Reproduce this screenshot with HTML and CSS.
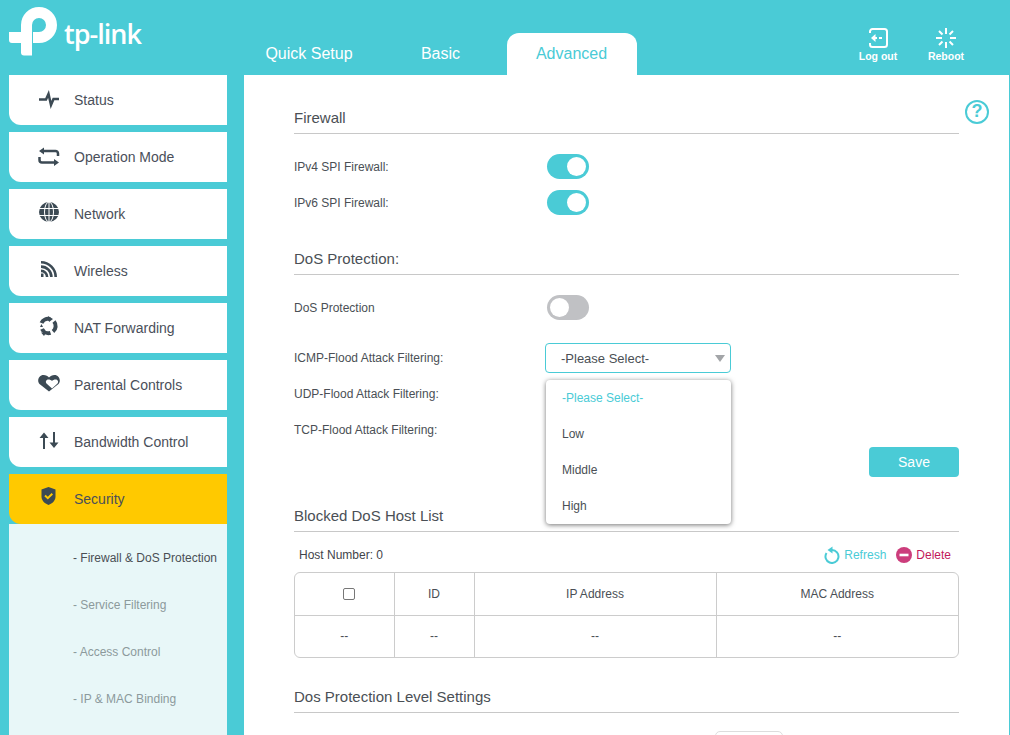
FILE: index.html
```html
<!DOCTYPE html>
<html lang="en">
<head>
    <meta charset="UTF-8">
    <meta name="viewport" content="width=device-width, initial-scale=1.0">
    <title>TP-Link Firewall</title>
    <link rel="stylesheet" href="styles.css">
</head>
<body>
    <header class="top">
        <div class="logo">
            <svg class="logo-mark" width="60" height="60" viewBox="0 0 60 60"><path fill="#fff" d="M21 32V25A18 18 0 1 1 39 43H33V32H39A7 7 0 1 0 32 25V55.5H24Q21 55.5 21 52.5V43H12Q9 43 9 40V32Z"/></svg>
            <span class="logo-text">tp-link</span>
        </div>
        <nav class="tabs">
            <a class="tab">Quick Setup</a>
            <a class="tab">Basic</a>
            <a class="tab active">Advanced</a>
        </nav>
        <div class="top-actions">
            <a class="top-action">
                <svg width="22" height="22" viewBox="0 0 22 22" fill="none" stroke="#fff" stroke-width="2"><path d="M3 6V4.500A2.500 2.500 0 0 1 5.500 2H17.500A2.500 2.500 0 0 1 20 4.500V17.500A2.500 2.500 0 0 1 17.500 20H5.500A2.500 2.500 0 0 1 3 17.500V16"/><path d="M8 11h2M12 11h3"/><path fill="#fff" stroke="none" d="M4 11l4.500-4v8z"/></svg>
                <span>Log out</span>
            </a>
            <a class="top-action">
                <svg width="22" height="22" viewBox="0 0 22 22" fill="none" stroke="#fff" stroke-width="2"><path d="M11 1v6M11 15v6M1 11h6M15 11h6M4 4l3.500 3.500M14.500 14.500L18 18M18 4l-3.500 3.500M7.500 14.500L4 18"/></svg>
                <span>Reboot</span>
            </a>
        </div>
    </header>

    <div class="layout">
        <aside class="side">
            <a class="side-item">
                <svg class="side-icon" viewBox="0 0 24 24" fill="none" stroke="#3c4a54" stroke-width="2.500"><path d="M2 11.500h7l2.500-5.500 2.500 11 2.500-6h5.500"/></svg>
                Status
            </a>
            <a class="side-item">
                <svg class="side-icon" viewBox="0 0 24 24" fill="none" stroke="#3c4a54" stroke-width="2.500"><path d="M6 6H18.500A2.500 2.500 0 0 1 21 8.500V11M18 17.500H5A2.500 2.500 0 0 1 2.500 15V12"/><path fill="#3c4a54" stroke="none" d="M2 6l5-3.500v7zM22 17.500l-5-3.500v7z"/></svg>
                Operation Mode
            </a>
            <a class="side-item">
                <svg class="side-icon" viewBox="0 0 24 24"><circle cx="12" cy="10" r="10" fill="#3c4a54"/><g fill="none" stroke="#fff" stroke-width="1"><ellipse cx="12" cy="10" rx="4.500" ry="10"/><path d="M12 0v20M1 6.500h22M1 13.500h22"/></g></svg>
                Network
            </a>
            <a class="side-item">
                <svg class="side-icon" viewBox="0 0 24 24" fill="none" stroke="#3c4a54" stroke-width="2.600"><path d="M4 3.300A14.700 14.700 0 0 1 18.700 18M4 7.600A10.400 10.400 0 0 1 14.400 18M4 11.900A6.100 6.100 0 0 1 10.100 18"/><path fill="#3c4a54" stroke="none" d="M4 14.500h2.500v3.500H4z"/></svg>
                Wireless
            </a>
            <a class="side-item">
                <svg class="side-icon" viewBox="0 0 24 24" fill="none" stroke="#3c4a54" stroke-width="4"><path d="M4.500 7A7 7 0 0 1 13 3.200M17 5.500A7 7 0 0 1 16 15.500M13.500 16.800A7 7 0 0 1 5 13"/><path fill="#3c4a54" stroke="none" d="M11 0l5 3-4 3zM7 20l-3-3.500 5 .2zM3 11l1.500-3 1.500 3z"/></svg>
                NAT Forwarding
            </a>
            <a class="side-item">
                <svg class="side-icon" viewBox="0 0 24 24"><path fill="#3c4a54" d="M12 18.500L2.500 11C-.5 7.500 2 2 6.500 2C9 2 10.800 3 12 4.500C13.500 3 15 2 17.500 2C22 2 24.500 7.500 21.500 11Z"/><path fill="#fff" d="M15 15.500L9.500 10.500C8 8.500 9.500 6.500 11.500 6.500C13 6.500 14 7 15 8C16 7 17 6.500 18.500 6.500C20.500 6.500 22 8.500 20.500 10.500Z"/></svg>
                Parental Controls
            </a>
            <a class="side-item">
                <svg class="side-icon" viewBox="0 0 24 24" fill="#3c4a54"><path d="M6 19V8H2.500L7 2.500 11.500 8H8v11zM16 2h2v10.500h3.500L17 18l-4.500-5.500H16z"/></svg>
                Bandwidth Control
            </a>
            <a class="side-item selected">
                <svg class="side-icon" viewBox="0 0 24 24"><path fill="#3c4a54" d="M11.500 0L18.500 2.500V9.500C18.500 13.500 15.500 16.500 11.500 18C7.500 16.500 4.500 13.500 4.500 9.500V2.500Z"/><path fill="none" stroke="#ffc900" stroke-width="2" d="M8 8.500l2.800 2.700 4.500-4.500"/></svg>
                Security
            </a>
            <div class="sub-menu">
                <a class="sub-item current">- Firewall &amp; DoS Protection</a>
                <a class="sub-item">- Service Filtering</a>
                <a class="sub-item">- Access Control</a>
                <a class="sub-item">- IP &amp; MAC Binding</a>
            </div>
        </aside>

        <main class="content">
            <span class="help">?</span>

            <h2 class="title">Firewall</h2>
            <div class="rows">
                <div class="row"><label>IPv4 SPI Firewall:</label><span class="toggle on"></span></div>
                <div class="row"><label>IPv6 SPI Firewall:</label><span class="toggle on"></span></div>
            </div>

            <h2 class="title dos-title">DoS Protection:</h2>
            <div class="rows">
                <div class="row"><label>DoS Protection</label><span class="toggle"></span></div>
            </div>
            <div class="rows flood">
                <div class="row">
                    <label>ICMP-Flood Attack Filtering:</label>
                    <div class="select">-Please Select-<i class="select-arrow"></i></div>
                </div>
                <div class="row"><label>UDP-Flood Attack Filtering:</label></div>
                <div class="row"><label>TCP-Flood Attack Filtering:</label></div>
                <ul class="dropdown">
                    <li class="picked">-Please Select-</li>
                    <li>Low</li>
                    <li>Middle</li>
                    <li>High</li>
                </ul>
            </div>
            <div class="save-row"><button class="save">Save</button></div>

            <h2 class="title">Blocked DoS Host List</h2>
            <div class="toolbar">
                <span class="host-count">Host Number: 0</span>
                <a class="tool refresh">
                    <svg width="16" height="18" viewBox="0 0 16 18" fill="none" stroke="#4acbd6" stroke-width="2"><path d="M8 4A6.500 6.500 0 1 1 2.500 7"/><path fill="#4acbd6" stroke="none" d="M8.500 .5v7l-5-3.500z"/></svg>
                    Refresh
                </a>
                <a class="tool delete">
                    <svg width="16" height="16" viewBox="0 0 16 16"><circle cx="8" cy="8" r="8" fill="#cc3d7c"/><path fill="#fff" d="M3.500 6.700h9v2.600h-9z"/></svg>
                    Delete
                </a>
            </div>
            <div class="table-wrap">
                <table class="hosts">
                    <thead>
                        <tr>
                            <th class="col-check"><span class="checkbox"></span></th>
                            <th class="col-id">ID</th>
                            <th class="col-ip">IP Address</th>
                            <th>MAC Address</th>
                        </tr>
                    </thead>
                    <tbody>
                        <tr><td>--</td><td>--</td><td>--</td><td>--</td></tr>
                    </tbody>
                </table>
            </div>

            <h2 class="title">Dos Protection Level Settings</h2>
            <div class="level-row"><span class="level-box"></span></div>
        </main>
    </div>
</body>
</html>
```

FILE: styles.css
```css
* {
    box-sizing: border-box;
}
html, body {
    height: 735px;
    overflow: hidden;
}
body {
    margin: 0;
    background: #4acbd6;
    font-family: "Liberation Sans", Arial, sans-serif;
    font-size: 12px;
    color: #4a4f55;
}
.top {
    height: 75px;
    display: flex;
    position: relative;
}
.logo {
    width: 244px;
    display: flex;
    align-items: flex-start;
}
.logo-mark {
    flex: none;
}
.logo-text {
    margin: 14px 0 0 4px;
    font-family: "Open Sans", sans-serif;
    font-size: 27px;
    font-weight: 600;
    letter-spacing: -1px;
    line-height: 40px;
    color: #fff;
}
.tabs {
    display: flex;
    gap: 1.5px;
    margin-top: 33px;
}
.tab {
    width: 130px;
    height: 42px;
    line-height: 41px;
    text-align: center;
    font-size: 16px;
    color: #fff;
}
.tab.active {
    background: #fff;
    color: #4acbd6;
    border-radius: 12px 12px 0 0;
    padding-right: 1px;
}
.top-actions {
    margin-left: auto;
    margin-right: 45px;
    display: flex;
    gap: 30px;
    padding-top: 27px;
}
.top-action {
    width: 38px;
    display: flex;
    flex-direction: column;
    align-items: center;
    color: #fff;
    font-size: 10.500px;
    font-weight: bold;
    white-space: nowrap;
}
.top-action span {
    margin-top: 1px;
}
.layout {
    display: flex;
    height: 660px;
}
.side {
    width: 244px;
    flex: none;
    padding-left: 9px;
    padding-right: 17px;
}
.side-item {
    height: 50px;
    margin-bottom: 7px;
    padding-left: 28px;
    display: flex;
    align-items: center;
    gap: 13px;
    background: #fff;
    border-radius: 0 0 0 12px;
    font-size: 14px;
    color: #4a4f5a;
}
.side-icon {
    width: 24px;
    height: 24px;
    flex: none;
}
.side-item.selected {
    background: #ffc900;
    margin-bottom: 0;
}
.sub-menu {
    background: #e8f7f8;
    height: 215px;
    padding-top: 11px;
}
.sub-item {
    display: block;
    height: 47px;
    line-height: 47px;
    padding-left: 64px;
    color: #8c9a9c;
    white-space: nowrap;
}
.sub-item.current {
    color: #4a4f55;
}
.content {
    position: relative;
    width: 765px;
    height: 100%;
    background: #fff;
    padding: 25px 50px 0;
}
.help {
    position: absolute;
    left: 721px;
    top: 25px;
    width: 24px;
    height: 24px;
    border: 2.500px solid #4acbd6;
    border-radius: 50%;
    text-align: center;
    line-height: 19px;
    font-size: 18px;
    font-weight: bold;
    color: #4acbd6;
}
.title {
    margin: 0;
    height: 34px;
    line-height: 36px;
    border-bottom: 1px solid #c8c8c8;
    font-size: 15px;
    font-weight: normal;
}
.dos-title {
    margin-top: 20px;
}
.rows {
    margin-top: 15px;
    position: relative;
}
.flood {
    margin-top: 14px;
}
.row {
    height: 36px;
    display: flex;
    align-items: center;
}
.row label {
    width: 251px;
    flex: none;
}
.toggle {
    width: 42px;
    height: 25px;
    margin: -1px 0 0 2px;
    border-radius: 13px;
    background: #c0c1c4;
    position: relative;
}
.toggle::after {
    content: "";
    position: absolute;
    top: 3px;
    left: 3px;
    width: 19px;
    height: 19px;
    border-radius: 50%;
    background: #fff;
}
.toggle.on {
    background: #4acbd6;
}
.toggle.on::after {
    left: 20px;
}
.select {
    width: 186px;
    height: 30px;
    line-height: 29px;
    padding-left: 15px;
    border: 1px solid #4acbd6;
    border-radius: 4px;
    font-size: 13px;
    position: relative;
}
.select-arrow {
    position: absolute;
    right: 5px;
    top: 11px;
    border-left: 5px solid transparent;
    border-right: 5px solid transparent;
    border-top: 7px solid #a3a5a8;
}
.dropdown {
    position: absolute;
    left: 252px;
    top: 40px;
    width: 185px;
    margin: 0;
    padding: 0;
    list-style: none;
    background: #fff;
    border-radius: 4px;
    box-shadow: 0 1px 5px rgba(0, 0, 0, 0.55);
}
.dropdown li {
    height: 36px;
    line-height: 36px;
    padding-left: 16px;
}
.dropdown .picked {
    color: #4acbd6;
}
.save-row {
    display: flex;
    justify-content: flex-end;
    margin-top: -1px;
    margin-bottom: 21px;
}
.save {
    width: 90px;
    height: 30px;
    border: none;
    border-radius: 4px;
    background: #4acbd6;
    color: #fff;
    font-family: inherit;
    font-size: 14px;
}
.toolbar {
    height: 40px;
    display: flex;
    align-items: center;
    padding: 6px 8px 0 5px;
}
.host-count {
    margin-right: auto;
    color: #3f444a;
}
.tool {
    display: flex;
    align-items: center;
    gap: 4px;
}
.refresh {
    color: #4acbd6;
    margin-right: 10px;
}
.delete {
    color: #c2185b;
}
.table-wrap {
    height: 86px;
    border: 1px solid #ccc;
    border-radius: 6px;
    overflow: hidden;
    margin-bottom: 21px;
}
.hosts {
    width: 100%;
    height: 100%;
    border-collapse: collapse;
    table-layout: fixed;
}
.hosts th, .hosts td {
    height: 42px;
    padding: 0;
    border: 1px solid #ccc;
    text-align: center;
    font-weight: normal;
}
.hosts tr > :first-child {
    border-left: none;
}
.hosts tr > :last-child {
    border-right: none;
}
.hosts thead th {
    border-top: none;
}
.hosts tbody td {
    border-bottom: none;
}
.col-check {
    width: 99px;
}
.col-id {
    width: 80px;
}
.col-ip {
    width: 242px;
}
.checkbox {
    display: inline-block;
    width: 12px;
    height: 12px;
    margin: -2px 0 0 10px;
    border: 1px solid #777;
    border-radius: 2px;
    vertical-align: middle;
}
.level-row {
    padding: 18px 0 0 421px;
}
.level-box {
    display: block;
    width: 68px;
    height: 30px;
    border: 1px solid #ddd;
    border-radius: 5px;
}
```
